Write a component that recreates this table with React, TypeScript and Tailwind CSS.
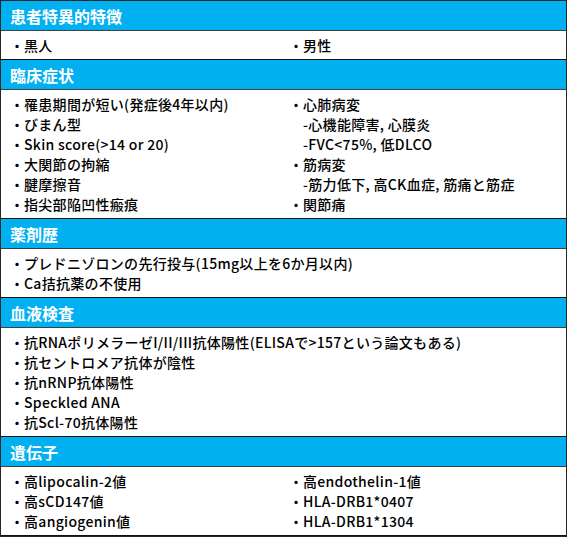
type Line = { text: string; sub?: boolean };

interface Section {
  title: string;
  left: Line[];
  right?: Line[];
}

const b = (text: string): Line => ({ text });
const s = (text: string): Line => ({ text, sub: true });

const sections: Section[] = [
  { title: "患者特異的特徴", left: [b("黒人")], right: [b("男性")] },
  {
    title: "臨床症状",
    left: [
      b("罹患期間が短い(発症後4年以内)"),
      b("びまん型"),
      b("Skin score(>14 or 20)"),
      b("大関節の拘縮"),
      b("腱摩擦音"),
      b("指尖部陥凹性瘢痕"),
    ],
    right: [
      b("心肺病変"),
      s("-心機能障害, 心膜炎"),
      s("-FVC<75%, 低DLCO"),
      b("筋病変"),
      s("-筋力低下, 高CK血症, 筋痛と筋症"),
      b("関節痛"),
    ],
  },
  {
    title: "薬剤歴",
    left: [b("プレドニゾロンの先行投与(15mg以上を6か月以内)"), b("Ca拮抗薬の不使用")],
  },
  {
    title: "血液検査",
    left: [
      b("抗RNAポリメラーゼI/II/III抗体陽性(ELISAで>157という論文もある)"),
      b("抗セントロメア抗体が陰性"),
      b("抗nRNP抗体陽性"),
      b("Speckled ANA"),
      b("抗Scl-70抗体陽性"),
    ],
  },
  {
    title: "遺伝子",
    left: [b("高lipocalin-2値"), b("高sCD147値"), b("高angiogenin値")],
    right: [b("高endothelin-1値"), b("HLA-DRB1*0407"), b("HLA-DRB1*1304")],
  },
];

function Item({ line }: { line: Line }) {
  if (line.sub) {
    return <div className="pl-[14px] whitespace-nowrap">{line.text}</div>;
  }
  return (
    <div className="flex whitespace-nowrap">
      <span className="w-[14px] text-center shrink-0">・</span>
      <span>{line.text}</span>
    </div>
  );
}

export default function App() {
  return (
    <div
      className="w-[567px] bg-white border border-[#262626] text-black"
      style={{ fontFamily: '"Noto Sans CJK JP", "Noto Sans", sans-serif' }}
    >
      {sections.map((sec) => (
        <div key={sec.title}>
          <div className="h-[30px] bg-[#00B0F0] border-b border-[#404040] px-[9px] flex items-center text-white font-bold text-[16px] leading-none">
            {sec.title}
          </div>
          <div className="border-b border-[#111] py-1 px-[9px] text-[14px] leading-[20px] font-medium tracking-[0.3px]">
            {sec.right ? (
              <div className="grid grid-cols-[279px_1fr]">
                <div>
                  {sec.left.map((l) => (
                    <Item key={l.text} line={l} />
                  ))}
                </div>
                <div>
                  {sec.right.map((l) => (
                    <Item key={l.text} line={l} />
                  ))}
                </div>
              </div>
            ) : (
              <div>
                {sec.left.map((l) => (
                  <Item key={l.text} line={l} />
                ))}
              </div>
            )}
          </div>
        </div>
      ))}
    </div>
  );
}
